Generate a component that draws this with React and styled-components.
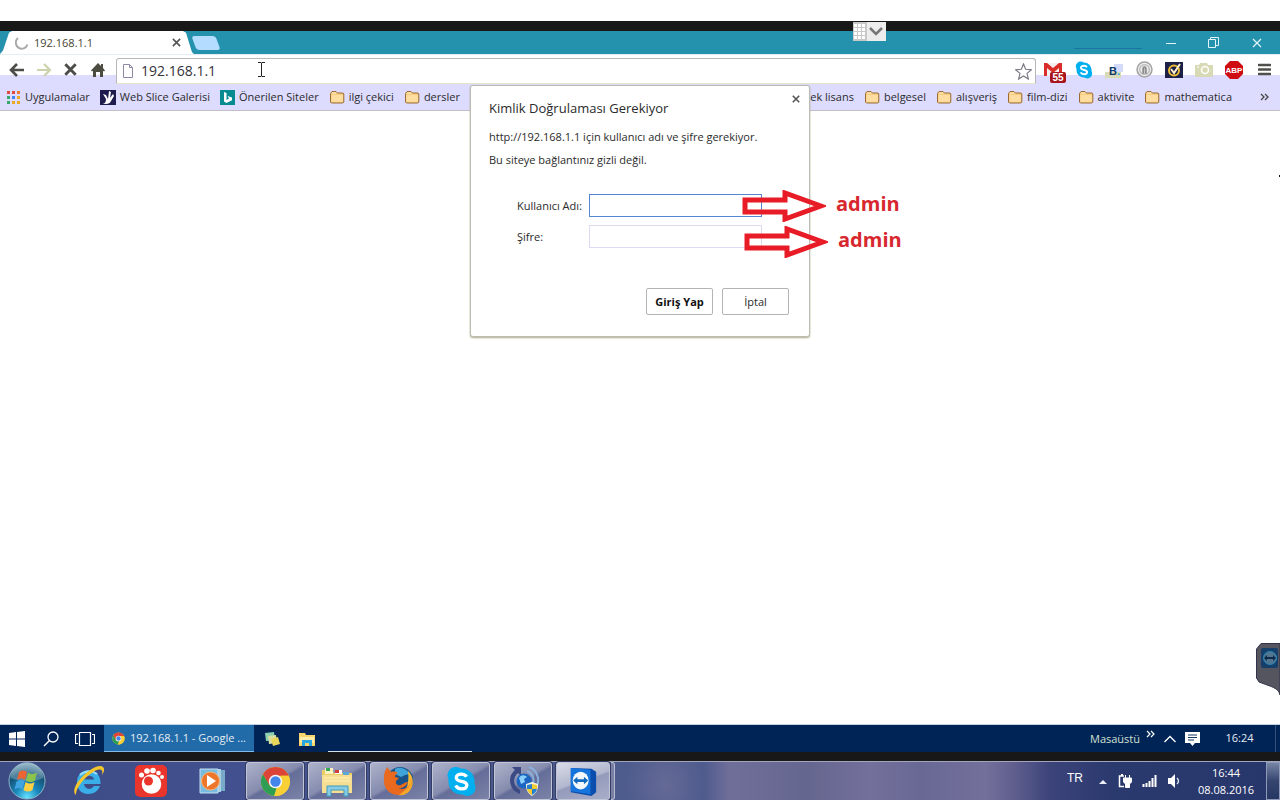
import React from "react";
import styled, { createGlobalStyle, css } from "styled-components";

const Global = createGlobalStyle`
  *, *::before, *::after { box-sizing: border-box; }
  body { margin: 0; background: #fff; color: #2b2b2b; font: 11px/16px "Open Sans", "Noto Sans", sans-serif; }
  button, input { font: inherit; color: inherit; }
  button { padding: 0; border: 0; background: none; }
  a { color: inherit; text-decoration: none; }
  svg { display: block; flex: none; }
`;

const Screen = styled.div`
  position: relative;
  display: flex;
  flex-direction: column;
  min-height: 100vh;
  overflow: hidden;
`;
const TopMargin = styled.div`height: 21px;`;
const Bezel = styled.div`
  height: ${(p) => p.$h}px;
  background: #181818;
`;

/* Browser window */
const TabStrip = styled.div`
  display: flex;
  height: 23px;
  background: #2592ad;
`;
const Tab = styled.div`
  display: flex;
  align-items: center;
  width: 194px;
  padding: 0 11px 0 15px;
  background: #fff;
  clip-path: polygon(0 100%, 3px 85%, 9px 8%, 12px 0, 183px 0, 186px 8%, 192px 92%, 194px 100%);
`;
const TabTitle = styled.span`
  flex: 1;
  padding-left: 5px;
  color: #45452f;
`;
const PlainButton = styled.button`
  display: flex;
  align-items: center;
  justify-content: center;
  width: ${(p) => p.$w}px;
`;
const NewTab = styled.button`
  width: 24px;
  height: 14px;
  margin-top: 5px;
  border-radius: 3px;
  background: #b3dcff;
  transform: skewX(20deg);
`;
const WindowControls = styled.div`
  display: flex;
  margin-left: auto;
  padding-right: 2px;
`;
const StripMark = styled.div`
  width: 68px;
  height: 1px;
  margin: 17px 7px 0 0;
  background: #1c74a3;
`;
const Toolbar = styled.div`
  display: flex;
  height: 30px;
  padding: 0 1px 0 3px;
  background: linear-gradient(#fff 20px, #dddcff 20px);
  border-top: 1px solid #e3eef2;
`;
const OmniBox = styled.label`
  display: flex;
  flex: 1;
  align-items: center;
  min-width: 0;
  height: 26px;
  margin: 3px 3px 0 5px;
  padding: 0 3px 0 5px;
  background: #fff;
  border: 1px solid #b9b6bb;
  border-bottom-color: #e3e6c8;
  border-radius: 3px 3px 0 0;
`;
const Address = styled.input`
  flex: 1;
  min-width: 0;
  height: 20px;
  padding: 0 0 2px 7px;
  border: 0;
  outline: 0;
  background: transparent;
  font-size: 14px;
  color: #33333a;
`;
const Bookmarks = styled.nav`
  display: flex;
  justify-content: space-between;
  height: 27px;
  padding-left: 6px;
  background: #dddcff;
  border-bottom: 1px solid #c2c0c4;
`;
const BookmarkGroup = styled.div`
  display: flex;
  align-items: center;
  gap: 10px;
`;
const Bookmark = styled.a`
  display: flex;
  align-items: center;
  gap: 4px;
  white-space: nowrap;
`;
const MoreBookmarks = styled.button`
  display: flex;
  justify-content: flex-end;
  width: 38px;
  padding-right: 11px;
`;
const Page = styled.main`
  flex: 1;
  min-height: 300px;
  border-bottom: 1px solid #bfd3e4;
`;

/* Login dialog */
const Dialog = styled.form`
  position: absolute;
  top: 85px;
  left: 0;
  right: 0;
  width: 340px;
  margin: 0 auto;
  padding: 13px 20px 21px 18px;
  background: #fff;
  border: 1px solid #bcbcb2;
  border-radius: 3px;
  box-shadow: 0 1px 2px #a9aa85;
`;
const DialogTitle = styled.h1`
  margin: 0 0 12px;
  font-size: 13px;
  line-height: 18px;
  font-weight: 400;
`;
const Message = styled.p`
  margin: 0 0 7px;
  line-height: 16px;
`;
const DialogClose = styled(PlainButton)`
  position: absolute;
  top: 4px;
  right: 4px;
  height: 18px;
`;
const Field = styled.label`
  display: flex;
  align-items: center;
  margin: 0 0 8px 28px;
`;
const FieldName = styled.span`width: 72px;`;
const FieldInput = styled.input`
  width: 173px;
  height: 23px;
  padding: 0 4px;
  background: #fff;
  border: 1px solid ${(p) => (p.$active ? "#5487cf" : "#dcd9f3")};
  outline: 0;
`;
const Fields = styled.div`padding-top: 19px;`;
const Actions = styled.div`
  display: flex;
  justify-content: flex-end;
  gap: 9px;
  padding-top: 32px;
`;
const ActionButton = styled.button`
  width: 67px;
  height: 27px;
  background: #fff;
  border: 1px solid #b4b4b8;
  border-radius: 2px;
  ${(p) => p.$primary && css`font-weight: 700; color: #111;`}
`;

/* Marks drawn over the dialog */
const Hint = styled.div`
  position: absolute;
  top: ${(p) => p.$top}px;
  left: calc(50% + ${(p) => p.$x}px);
  display: flex;
  align-items: flex-start;
  gap: 10px;
  color: #d8282f;
  font: 700 20px/28px "Open Sans", sans-serif;
`;
const ScreenHandle = styled.button`
  position: absolute;
  top: 22px;
  left: calc(50% + 213px);
`;
const SideHandle = styled.button`
  position: absolute;
  right: 0;
  bottom: 105px;
`;
const EdgeMark = styled.div`
  position: absolute;
  top: 175px;
  right: 0;
  width: 1px;
  height: 2px;
  background: #111;
`;
const Caret = styled.div`
  position: absolute;
  top: 62px;
  left: 257px;
`;

/* Inner taskbar */
const TaskbarTen = styled.footer`
  display: flex;
  height: 27px;
  background: #002456;
  color: #e6edf4;
`;
const RunningTask = styled.button`
  display: flex;
  align-items: center;
  gap: 5px;
  width: 150px;
  margin-left: 2px;
  padding-left: 8px;
  background: #206ba8;
  border-bottom: 1px solid #83bbea;
  white-space: nowrap;
`;
const Underline = styled.div`
  width: 144px;
  height: 1px;
  margin: auto 0 0 4px;
  background: #d5e2ee;
`;
const TenTray = styled.div`
  display: flex;
  align-items: center;
  margin-left: auto;
  padding-right: 4px;
`;
const TrayLabel = styled.span`margin-right: 6px; color: #d3e2d2;`;
const TenClock = styled.time`
  width: 70px;
  padding-right: 2px;
  align-self: stretch;
  border-right: 1px solid #36527c;
  line-height: 26px;
  text-align: center;
`;

/* Outer taskbar */
const TaskbarSeven = styled.footer`
  display: flex;
  height: 39px;
  border-top: 1px solid #a3a5bf;
  color: #fff;
  background:
    radial-gradient(ellipse 40px 50px at 52% 60%, #75739c99 0, transparent 100%),
    linear-gradient(90deg, #3c4b84 0, #42508f 18%, #4d5c8d 48%, #4e5b8d 55%, #706f9a 57%, #65668f 63%, #73709b 68%, #696894 72%, #73709b 77%, #62608f 79%, #3c447a 82%, #2a396e 87%, #28376b 100%);
`;
const Pinned = styled.button`
  display: flex;
  align-items: center;
  justify-content: center;
  width: 62px;
`;
const Start = styled(Pinned)`
  width: 54px;
  margin-right: 4px;
`;
const AppButton = styled.button`
  display: flex;
  align-items: center;
  justify-content: center;
  width: ${(p) => p.$w || 58}px;
  height: 38px;
  margin: 0 2px;
  border: 1px solid #c1c5d8;
  border-radius: 3px;
  box-shadow: 0 0 0 1px #343c63;
  background: ${(p) => (p.$active
    ? "linear-gradient(160deg, #d9dce8, #b2b7ce 48%, #949bbb 52%, #a8aec9)"
    : "linear-gradient(150deg, #aeb2ca, #858cae 48%, #656e99 54%, #7c83a8)")};
`;
const StackEdge = styled.div`
  width: 4px;
  margin-left: -1px;
  border: 1px solid #b6bad0;
  border-left: 0;
  border-radius: 0 3px 3px 0;
  background: #7a80a3;
`;
const SevenTray = styled.div`
  display: flex;
  align-items: center;
  margin-left: auto;
`;
const Language = styled.span`
  width: 32px;
  padding-bottom: 6px;
  font: 12px/16px "Liberation Sans", sans-serif;
`;
const SevenClock = styled.time`
  width: 80px;
  font-size: 11px;
  line-height: 17px;
  text-align: center;
`;
const ShowDesktop = styled.button`
  width: 14px;
  height: 38px;
  border: 1px solid #8f9ab8;
  background: linear-gradient(#7684a4, #35456f 50%, #263763);
`;

const Svg = ({ w, h = w, box, children }) => (
  <svg width={w} height={h} viewBox={box || `0 0 ${w} ${h}`} fill="none" aria-hidden="true">{children}</svg>
);

const Cross = ({ size = 9, color = "#555", weight = 2 }) => (
  <Svg w={size} box="0 0 10 10"><path d="M1 1l8 8M9 1l-8 8" stroke={color} strokeWidth={weight} /></Svg>
);

const Folder = () => (
  <Svg w={16} h={14}>
    <path d="M1.5 12V3.5L3 1.5h4L8.5 3H14l.8 1v8l-1 1H2.5z" fill="#f7cd82" stroke="#9a6b35" />
    <path d="M2.5 5h11.3v6.8H2.5z" fill="#fedda0" /><path d="M3 3h4" stroke="#fff0c6" />
  </Svg>
);

const Chrome = ({ size }) => (
  <Svg w={size} box="0 0 32 32">
    <circle cx="16" cy="16" r="15" fill="#f8cf35" />
    <path d="M3 8.5A15 15 0 0 1 29 8.5L29.5 10H16L9.5 20z" fill="#dc4437" />
    <path d="M3 8.5l7.2 12.2L17 23l-2.5 8A15 15 0 0 1 3 8.5z" fill="#2f9e55" />
    <path d="M14.5 31l7.2-12.5L22 10h7.6A15 15 0 0 1 14.5 31z" fill="#f8cf35" />
    <circle cx="16" cy="16" r="7" fill="#f3f5f8" /><circle cx="16" cy="16" r="5.3" fill="#4385ea" />
  </Svg>
);

const Skype = ({ size }) => (
  <Svg w={size} box="0 0 32 32">
    <circle cx="10" cy="9.5" r="8.5" fill="#00aff0" /><circle cx="22" cy="22.5" r="8.5" fill="#00aff0" />
    <circle cx="16" cy="16" r="13.5" fill="#00aff0" />
    <path d="M21.2 11.2c-1-2-3-2.8-5.4-2.8-3.2 0-5.2 1.4-5.2 3.7 0 5.4 10.9 2.2 10.9 7.5 0 2.6-2.2 4-5.5 4-2.8 0-4.8-1-6-3.4" stroke="#fff" strokeWidth="3.4" />
  </Svg>
);

const TeamViewer = ({ size }) => (
  <Svg w={size} box="0 0 32 32">
    <path d="M3 2l22 1 5 3v22l-5 4-22-4z" fill="#0b4dad" />
    <path d="M3 2l21 2v26L3 27z" fill="#1675dc" /><ellipse cx="13.5" cy="15.500" rx="8.500" ry="9.500" fill="#f3f8fd" />
    <path d="M5.500 15.500l4.500-4v2.500h7v-2.500l4.500 4-4.500 4V17h-7v2.500z" fill="#1269bd" />
  </Svg>
);

const icons = {
  apps: (
    <Svg w={15}>
      {["#dd4b43", "#dd4b43", "#e77b36", "#39a66b", "#4285f4", "#eaaa28", "#39a66b", "#eaaa28", "#eaaa28"].map((c, i) => (
        <rect key={i} x={1 + (i % 3) * 5} y={1 + Math.floor(i / 3) * 5} width="3" height="3" fill={c} />
      ))}
    </Svg>
  ),
  slice: (
    <Svg w={16} h={15}>
      <path d="M0 0h16v15H0z" fill="#1d1c4c" />
      <path d="M2 13c3 1 4-1 4-4L3 4l3 1 2 4 1-8 2 1-1 6 3-4 1 2-3 5c-1 3-5 4-9 2z" fill="#fff" />
    </Svg>
  ),
  bing: (
    <Svg w={15}>
      <path d="M0 0h15v15H0z" fill="#078a90" /><path d="M4 2l2.500 1v7L9 8.500 7.500 6 12 7.500v2.700L6.500 13 4 11.500z" fill="#fff" />
    </Svg>
  ),
};

const leftLinks = [
  ["Uygulamalar", icons.apps],
  ["Web Slice Galerisi", icons.slice],
  ["Önerilen Siteler", icons.bing],
  ["ilgi çekici"],
  ["dersler"],
];
const rightLinks = ["yüksek lisans", "belgesel", "alışveriş", "film-dizi", "aktivite", "mathematica"];

const navButtons = [
  ["Geri", <Svg w={16} h={14}><path d="M15 7H3M8 1L2 7l6 6" stroke="#4c4c48" strokeWidth="2.600" /></Svg>],
  ["İleri", <Svg w={16} h={14}><path d="M1 7h12M8 1l6 6-6 6" stroke="#cdd2ac" strokeWidth="2.200" /></Svg>],
  ["Durdur", <Cross size={13} color="#4c4c48" weight={2.2} />],
  ["Ana sayfa", <Svg w={14}><path d="M7 0l3 3V1h2v4l2 2.500-1 1-1-.8V14H9V9H5v5H2V7.700l-1 .8-1-1z" fill="#4c4c40" /></Svg>],
];

const extensions = [
  ["Gmail", (
    <Svg w={24} h={26}>
      <path d="M2 6h18v13H2z" fill="#f5eeee" /><path d="M2 19V6h3l6 5 6-5h3v13h-3v-8l-6 5-6-5v8z" fill="#d92d29" />
      <rect x="8" y="15" width="16" height="11" rx="2" fill="#a9151d" />
      <text x="16" y="24" textAnchor="middle" fontFamily="Liberation Sans" fontWeight="700" fontSize="10" fill="#fff">55</text>
    </Svg>
  )],
  ["Skype", <Skype size={18} />],
  ["Booking", (
    <Svg w={18}>
      <path d="M0 11h16v6H0z" fill="#d9dbb7" /><path d="M9 3h9v8H9z" fill="#d3dafa" />
      <text x="4" y="14" fontFamily="Liberation Sans" fontWeight="700" fontSize="11" fill="#0c3768">B<tspan fill="#209bd8">.</tspan></text>
    </Svg>
  )],
  ["Kilit", (
    <Svg w={17} box="0 0 16 16">
      <circle cx="8" cy="8" r="7" fill="#eee" stroke="#a4a4a2" strokeWidth="1.500" /><circle cx="8" cy="8" r="4.500" stroke="#bbb" strokeWidth="1.400" />
      <path d="M6.800 12V7a1.200 1.200 0 0 1 2.400 0v5" stroke="#8b8b8b" strokeWidth="1.800" />
    </Svg>
  )],
  ["Norton", (
    <Svg w={18} h={16}>
      <path d="M0 0h18v16H0z" fill="#1d2047" /><circle cx="9" cy="8.500" r="5" stroke="#edbd35" strokeWidth="2" />
      <path d="M6 7l3 4 6-9" stroke="#fff2cb" strokeWidth="2" />
    </Svg>
  )],
  ["Kamera", (
    <Svg w={18} h={16}>
      <path d="M0 3h4l1-2h7l1 2h5v12H0z" fill="#d8dab5" /><circle cx="10" cy="8" r="3.500" stroke="#fff" strokeWidth="1.500" />
      <path d="M2 5h2" stroke="#fff" />
    </Svg>
  )],
  ["Adblock Plus", (
    <Svg w={20}>
      <path d="M6 1h8l5 5v8l-5 5H6l-5-5V6z" fill="#cf0c12" />
      <text x="10" y="13" textAnchor="middle" fontFamily="Liberation Sans" fontWeight="700" fontSize="8" fill="#fff">ABP</text>
    </Svg>
  )],
  ["Menü", <Svg w={13}><path d="M1 2h11M1 6.500h11M1 11h11" stroke="#50504a" strokeWidth="2.600" strokeLinecap="round" /></Svg>],
];

const Explorer = ({ size }) => (
  <Svg w={size} box="0 0 32 32">
    <path d="M1 5h10l2 3h18v20H1z" fill="#edcd68" /><path d="M4 3h8v6H4z" fill="#fff1bd" /><path d="M5 3h4v3H5z" fill="#35a853" />
    <path d="M14 5h7v4h-7z" fill="#fff" /><path d="M14 5h4v3h-4z" fill="#cf3f37" /><path d="M22 7h6v3h-6z" fill="#5aa8d7" />
    <path d="M1 10h30v18H1z" fill="#f6df92" /><path d="M3 13h26M3 16h26" stroke="#fff0b8" />
    <path d="M6 31V21h21v10h-4v-6H10v6z" fill="#87cbe4" stroke="#3f9bbd" />
  </Svg>
);

const StartOrb = () => (
  <svg width="38" height="38" viewBox="0 0 38 38" fill="none" aria-hidden="true">
    <defs>
      <radialGradient id="orb" cx=".5" cy=".95" r=".95">
        <stop stopColor="#65e4ff" /><stop offset=".35" stopColor="#1a87bd" /><stop offset=".7" stopColor="#155377" /><stop offset="1" stopColor="#8eb1c2" />
      </radialGradient>
    </defs>
    <circle cx="19" cy="19" r="18" fill="url(#orb)" stroke="#8eb4c6" />
    <path d="M3 16a16 16 0 0 1 32 0c-10 5-21 4-32 0z" fill="#b7d2dd" opacity=".35" />
    <path d="M11 10c3-2 5-2 8 0l-2 8c-3-2-5-2-8 0z" fill="#ec6533" />
    <path d="M20 10.500c3 2 5 2 9 0l-2 8c-3 2-6 2-9 0z" fill="#8bc34b" />
    <path d="M8.500 19.500c3-2 5-2 8 0l-2 8c-3-2-5-2-8 0z" fill="#3fa4df" />
    <path d="M17.500 20c3 2 6 2 9 0l-2 8c-3 2-6 2-9 0z" fill="#ffd044" />
  </svg>
);

const InternetExplorer = () => (
  <Svg w={34}>
    <path d="M28.500 20H12c.5 5 6.500 7 10 2h6c-2 5-6 8-12 8C9 30 5 25 5 18S10 6 17 6s12 6 11.500 14z" fill="#39aee8" />
    <path d="M12 15.500h10c-.6-5-9-5-10 0z" fill="#3f4f8b" />
    <path d="M8 11C12 7 20 6 25 10" stroke="#9adffa" strokeWidth="2" />
    <path d="M4 31c-4-3-1-11 6-18C18 5 27 0 31 3c2 2 1 5-1 8 1-4 0-6-3-5.500C21 6 4 20 4 31z" fill="#f4c62c" />
  </Svg>
);

const Gom = () => (
  <Svg w={32}>
    <rect width="32" height="32" rx="5" fill="#e9352b" />
    <circle cx="16.500" cy="19" r="9.800" fill="#fff" /><circle cx="13.500" cy="16" r="4.500" fill="#e9352b" />
    <circle cx="6.500" cy="10" r="2.500" fill="#fff" /><circle cx="12" cy="6" r="2.800" fill="#fff" />
    <circle cx="18" cy="5.500" r="2.800" fill="#fff" /><circle cx="23.500" cy="8" r="2.300" fill="#fff" /><circle cx="27" cy="12" r="2" fill="#fff" />
  </Svg>
);

const Player = () => (
  <Svg w={28}>
    <path d="M6 3h20v21H6z" fill="#78abc9" /><path d="M4 2h18v23H4z" fill="#a8cee0" /><path d="M1 2h18v24H1z" fill="#78bce1" stroke="#c4e0ee" />
    <circle cx="11.500" cy="14" r="9" fill="#ed762a" stroke="#f8b775" /><path d="M8 8l9 6-9 6z" fill="#fff" />
  </Svg>
);

const Firefox = () => (
  <Svg w={32}>
    <circle cx="17" cy="15" r="13" fill="#175389" /><path d="M12 4c5-3 12 0 15 5l-5 1-4 2-6-3z" fill="#3fa4d7" />
    <path d="M25 6c6 6 6 14 2 19-3 4-7 6-12 5 7-2 12-9 10-24z" fill="#f9bb30" />
    <path d="M2 6c1-1 1-2 2-4l4 5c3-1 6 0 7 1-2 1-3 2-3 4l4 1-3 3c-1 3 2 5 5 4 2-1 4-3 7-3-2 5-7 7-10 6 6 3 12-1 13-9 2 8-3 16-12 16C7 30 1 24 1 16c0-4 0-7 1-10z" fill="#e96a1e" />
    <path d="M22 25c4-3 6-7 5-13 4 5 2 13-3 16-3 2-6 2-8 2z" fill="#f6a52a" />
  </Svg>
);

const Updater = () => (
  <Svg w={32}>
    <path d="M13 29A14 14 0 0 1 8 5L5 2h9v9l-3-3a10 10 0 0 0 2 17z" fill="#3c4a84" />
    <path d="M22 2a14 14 0 0 1 5 23M20 6a10 10 0 0 1 4 16" stroke="#8ab0dc" strokeWidth="2" />
    <circle cx="17" cy="16" r="7.500" fill="#1b66c2" /><path d="M12 13c2-4 6-3 8-1l-3 2 1 3-4 2z" fill="#8ad0fa" />
    <path d="M19 19l6-2 6 2c0 7-2 9-6 12-4-3-6-5-6-12z" fill="#f4f1db" />
    <path d="M20 20l5-1v5h-5zM25 24h5c-1 3-2 4-5 6z" fill="#267fd1" /><path d="M25 19l5 1v4h-5zM20 24h5v6c-3-2-4-3-5-6z" fill="#f1cb30" />
  </Svg>
);

const Arrow = () => (
  <Svg w={84} h={32}><path d="M3 10h40V3l36 13-36 13v-7H3z" stroke="#e81c26" strokeWidth="5" /></Svg>
);

export default function App() {
  return (
    <>
      <Global />
      <Screen>
        <TopMargin />
        <Bezel $h={10} />
        <TabStrip>
          <Tab>
            <Svg w={14}><path d="M3 2a6 6 0 1 0 9.500 6.500" stroke="#aaa" strokeWidth="2" /></Svg>
            <TabTitle>192.168.1.1</TabTitle>
            <PlainButton $w={14} aria-label="Sekmeyi kapat"><Cross size={9} weight={1.8} /></PlainButton>
          </Tab>
          <NewTab aria-label="Yeni sekme" />
          <WindowControls>
            <StripMark />
            <PlainButton $w={43} aria-label="Simge durumuna küçült"><Svg w={10}><path d="M0 5.500h10" stroke="#e2f5fa" /></Svg></PlainButton>
            <PlainButton $w={43} aria-label="Önceki boyut"><Svg w={11}><path d="M.5 2.500h7v8h-7zM2.500 2V.5h8v8H8" stroke="#e2f5fa" /></Svg></PlainButton>
            <PlainButton $w={43} aria-label="Kapat"><Cross size={10} color="#e2f5fa" weight={1.2} /></PlainButton>
          </WindowControls>
        </TabStrip>
        <Toolbar>
          {navButtons.map(([name, icon]) => <PlainButton $w={27} key={name} aria-label={name}>{icon}</PlainButton>)}
          <OmniBox>
            <Svg w={12} h={14}><path d="M1.500.5h6l3 3v10h-9zM7.500.5v3h3" stroke="#8d8aa8" /></Svg>
            <Address aria-label="Adres" defaultValue="192.168.1.1" />
            <Svg w={17} box="0 0 18 18"><path d="M9 1l2.300 5.700 6 .4-4.600 3.900 1.500 6L9 13.700 3.800 17l1.500-6L.7 7.100l6-.4z" stroke="#777783" strokeWidth="1.200" /></Svg>
          </OmniBox>
          {extensions.map(([name, icon]) => <PlainButton $w={30} key={name} aria-label={name}>{icon}</PlainButton>)}
        </Toolbar>
        <Bookmarks>
          <BookmarkGroup>
            {leftLinks.map(([name, icon]) => <Bookmark href="#" key={name}>{icon || <Folder />}{name}</Bookmark>)}
          </BookmarkGroup>
          <BookmarkGroup>
            {rightLinks.map((name) => <Bookmark href="#" key={name}><Folder />{name}</Bookmark>)}
            <MoreBookmarks aria-label="Diğer yer imleri">
              <Svg w={9} h={8}><path d="M1 1l3 3-3 3M5 1l3 3-3 3" stroke="#444" strokeWidth="1.300" /></Svg>
            </MoreBookmarks>
          </BookmarkGroup>
        </Bookmarks>
        <Page />

        <TaskbarTen>
          <PlainButton $w={34} aria-label="Başlat">
            <Svg w={16}><path d="M0 2l7-1v6.500H0zM8 1l8-1v7.500H8zM0 8.500h7V15l-7-1zM8 8.500h8V16l-8-1z" fill="#fff" /></Svg>
          </PlainButton>
          <PlainButton $w={34} aria-label="Ara">
            <Svg w={16}><circle cx="10" cy="6" r="5" stroke="#fff" strokeWidth="1.300" /><path d="M6.500 9.500L1 15" stroke="#fff" strokeWidth="1.500" /></Svg>
          </PlainButton>
          <PlainButton $w={34} aria-label="Görev görünümü">
            <Svg w={20} h={14}><path d="M4.500.5h11v13h-11zM3 2.500H.5v9H3M17 2.500h2.500v9H17" stroke="#fff" strokeWidth="1.200" /></Svg>
          </PlainButton>
          <RunningTask><Chrome size={13} />192.168.1.1 - Google ...</RunningTask>
          <PlainButton $w={35} aria-label="Notlar">
            <Svg w={16}><path d="M1 2l9-1 1 8-9 1z" fill="#8bd0b1" /><path d="M4 5l8-1 1 8-8 1z" fill="#d8dfa0" /><path d="M7 8l7-2 2 7-7 2z" fill="#ead55c" /></Svg>
          </PlainButton>
          <PlainButton $w={35} aria-label="Dosya Gezgini">
            <Svg w={16} h={14}><path d="M0 1h6l1 2h9v11H0z" fill="#f8d56c" /><path d="M1 5h14v6H1z" fill="#ffebaa" /><path d="M3 14V8h10v6h-3v-3H6v3z" fill="#2aa7df" /></Svg>
          </PlainButton>
          <Underline />
          <TenTray>
            <TrayLabel>Masaüstü</TrayLabel>
            <Svg w={9} h={18}><path d="M1 1l3 3-3 3M5 1l3 3-3 3" stroke="#fff" strokeWidth="1.200" /></Svg>
            <PlainButton $w={29} aria-label="Gizli simgeler"><Svg w={12} h={8}><path d="M.5 7L6 1.500 11.500 7" stroke="#fff" strokeWidth="1.300" /></Svg></PlainButton>
            <Svg w={22} h={16}><path d="M1 1h15v11h-5l-2.500 3L6 12H1z" fill="#fff" /><path d="M4 4h9M4 6.500h9M4 9h6" stroke="#153765" /></Svg>
            <TenClock>16:24</TenClock>
          </TenTray>
        </TaskbarTen>
        <Bezel $h={9} />
        <TaskbarSeven>
          <Start aria-label="Başlat menüsü"><StartOrb /></Start>
          <Pinned aria-label="Internet Explorer"><InternetExplorer /></Pinned>
          <Pinned aria-label="GOM Player"><Gom /></Pinned>
          <Pinned aria-label="Media Player"><Player /></Pinned>
          <AppButton aria-label="Chrome"><Chrome size={31} /></AppButton>
          <AppButton aria-label="Klasörler"><Explorer size={32} /></AppButton>
          <AppButton aria-label="Firefox"><Firefox /></AppButton>
          <AppButton aria-label="Skype"><Skype size={31} /></AppButton>
          <AppButton aria-label="Güncelleme"><Updater /></AppButton>
          <AppButton $w={54} $active aria-label="TeamViewer"><TeamViewer size={30} /></AppButton>
          <StackEdge />
          <SevenTray>
            <Language>TR</Language>
            <Svg w={14} h={10}><path d="M0 8l4-4 4 4z" fill="#eef0f7" /></Svg>
            <PlainButton $w={23} aria-label="Güç">
              <Svg w={14}><path d="M6 2H1.500v10.500H6M3 .5h2" stroke="#fff" strokeWidth="1.500" /><path d="M5.500 4h8v4l-2 2v3.500h-4V10l-2-2zM7.500 1v3M11.500 1v3" fill="#fff" stroke="#fff" /></Svg>
            </PlainButton>
            <PlainButton $w={26} aria-label="Ağ">
              <Svg w={15} h={12}><path d="M1.500 9v3M4.500 8v4M7.500 6v6M10.500 3v9M13.500 0v12" stroke="#fff" strokeWidth="2" /></Svg>
            </PlainButton>
            <PlainButton $w={24} aria-label="Ses">
              <Svg w={13} h={14}><path d="M0 4h3l4-4v14l-4-4H0z" fill="#fff" /><path d="M9 4q3 3 0 6" stroke="#dfe5f2" strokeWidth="1.300" /></Svg>
            </PlainButton>
            <SevenClock>16:44<br />08.08.2016</SevenClock>
            <ShowDesktop aria-label="Masaüstünü göster" />
          </SevenTray>
        </TaskbarSeven>

        <Dialog onSubmit={(e) => e.preventDefault()}>
          <DialogClose type="button" $w={18} aria-label="Pencereyi kapat"><Cross size={8} /></DialogClose>
          <DialogTitle>Kimlik Doğrulaması Gerekiyor</DialogTitle>
          <Message>http://192.168.1.1 için kullanıcı adı ve şifre gerekiyor.</Message>
          <Message>Bu siteye bağlantınız gizli değil.</Message>
          <Fields>
            <Field><FieldName>Kullanıcı Adı:</FieldName><FieldInput $active /></Field>
            <Field><FieldName>Şifre:</FieldName><FieldInput type="password" /></Field>
          </Fields>
          <Actions>
            <ActionButton $primary>Giriş Yap</ActionButton>
            <ActionButton type="button">İptal</ActionButton>
          </Actions>
        </Dialog>
        <Hint $top={190} $x={102}><Arrow />admin</Hint>
        <Hint $top={226} $x={104}><Arrow />admin</Hint>
        <Caret><Svg w={9} h={15}><path d="M1 .5h3l.5 1 .5-1h3M1 14.500h3l.5-1 .5 1h3M4.500 1v13" stroke="#222" /></Svg></Caret>
        <ScreenHandle aria-label="Araç çubuğu">
          <Svg w={33} h={19}>
            <path d="M0 0h14v19H0z" fill="#c9c9c9" /><path d="M14 0h19v19H14z" fill="#ededed" />
            <path d="M2.500 2v16M6.500 2v16M10.500 2v16" stroke="#fff" strokeWidth="3" strokeDasharray="3 1" />
            <path d="M17 6l6 6 6-6" stroke="#777" strokeWidth="2.500" />
          </Svg>
        </ScreenHandle>
        <SideHandle aria-label="TeamViewer paneli">
          <Svg w={24} h={52}>
            <path d="M5 .5h19V52c-1-5-5-7-10-9L3 39 .5 35V6z" fill="#55555f" stroke="#33334c" />
            <rect x="5" y="5" width="17" height="20" rx="2" fill="#163f6c" /><circle cx="14" cy="15" r="6.500" fill="#52768f" stroke="#2785b4" />
            <path d="M8 15l3-3v2h6v-2l3 3-3 3v-2h-6v2z" fill="#102a4e" />
          </Svg>
        </SideHandle>
        <EdgeMark />
      </Screen>
    </>
  );
}
